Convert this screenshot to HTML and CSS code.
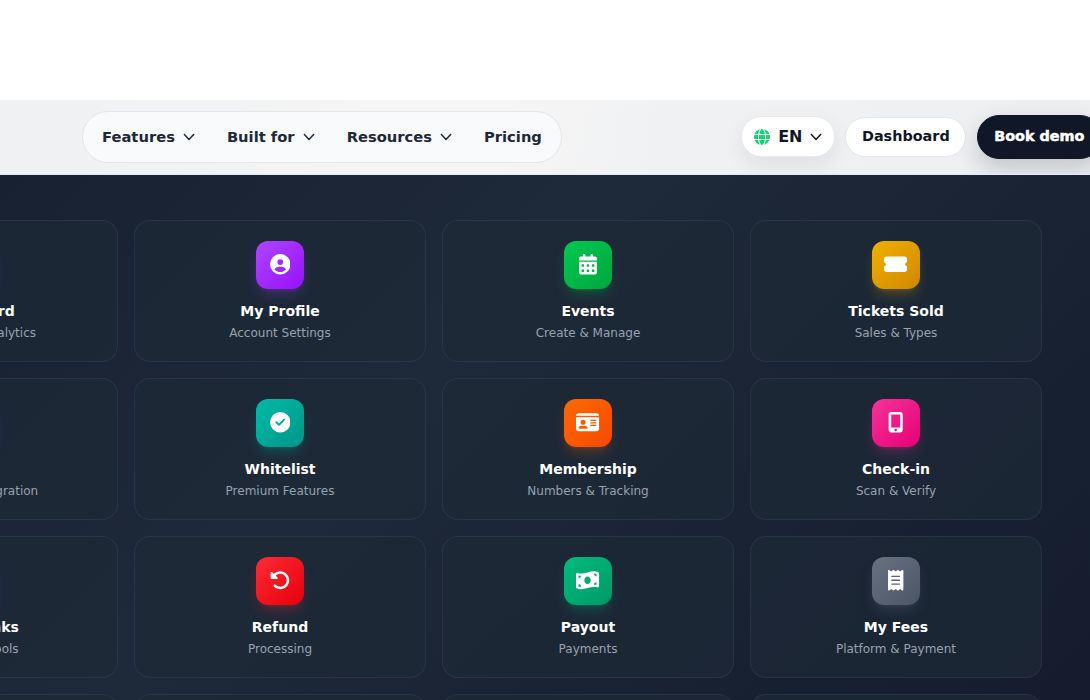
FILE: index.html
```html
<!DOCTYPE html>
<html lang="en">
<head>
<meta charset="utf-8">
<title>Event platform</title>
<link rel="stylesheet" href="styles.css">
</head>
<body>
<svg class="sprite" width="0" height="0">
  <symbol id="chevron" viewBox="0 0 12 12"><path d="M1.400 3.600 6 8.400 10.600 3.600" fill="none" stroke="currentColor" stroke-width="1.500" stroke-linecap="round" stroke-linejoin="round"/></symbol>
</svg>
<header class="header">
  <nav class="nav">
    <a class="nav-link">Features <svg class="chevron"><use href="#chevron"/></svg></a>
    <a class="nav-link">Built for <svg class="chevron"><use href="#chevron"/></svg></a>
    <a class="nav-link">Resources <svg class="chevron"><use href="#chevron"/></svg></a>
    <a class="nav-link">Pricing</a>
  </nav>
  <div class="actions">
    <a class="lang">
      <svg class="globe" viewBox="0 0 512 512"><path fill="currentColor" d="M352 256c0 22.2-1.2 43.6-3.3 64H163.3c-2.2-20.4-3.3-41.8-3.3-64s1.2-43.6 3.3-64H348.7c2.2 20.4 3.3 41.8 3.3 64zm28.8-64H503.9c5.3 20.5 8.1 41.9 8.1 64s-2.8 43.5-8.1 64H380.8c2.1-20.6 3.2-42 3.2-64s-1.1-43.4-3.2-64zm112.6-32H376.7c-10-63.9-29.8-117.4-55.3-151.6c78.3 20.7 142 77.5 171.9 151.6zm-149.1 0H167.7c6.1-36.4 15.5-68.6 27-94.7c10.5-23.6 22.2-40.7 33.5-51.5C239.4 3.2 248.7 0 256 0s16.6 3.2 27.8 13.8c11.3 10.8 23 27.9 33.5 51.5c11.6 26 20.9 58.2 27 94.7zm-209 0H18.6C48.6 85.9 112.2 29.1 190.6 8.4C165.1 42.6 145.3 96.1 135.3 160zM8.1 192H131.2c-2.1 20.6-3.2 42-3.2 64s1.1 43.4 3.2 64H8.1C2.8 299.5 0 278.1 0 256s2.8-43.5 8.1-64zM194.7 446.6c-11.6-26-20.9-58.2-27-94.6H344.3c-6.1 36.4-15.5 68.6-27 94.6c-10.5 23.6-22.2 40.7-33.5 51.5C272.6 508.8 263.3 512 256 512s-16.6-3.2-27.8-13.8c-11.3-10.8-23-27.9-33.5-51.5zM135.3 352c10 63.9 29.8 117.4 55.3 151.6C112.2 482.9 48.6 426.1 18.6 352H135.3zm358.1 0c-30 74.1-93.6 130.9-171.9 151.6c25.5-34.2 45.2-87.7 55.3-151.6H493.4z"/></svg>
      <span>EN</span>
      <svg class="chevron"><use href="#chevron"/></svg>
    </a>
    <a class="button">Dashboard</a>
    <a class="button button-dark">Book demo</a>
  </div>
</header>
<main class="hero">
  <div class="grid">
    <article class="card"><div class="tile blue"></div><h3>Dashboard</h3><p>Overview &amp; Analytics</p></article>
    <article class="card"><div class="tile purple"><svg viewBox="0 0 512 512"><path d="M399 384.2C376.9 345.8 335.4 320 288 320H224c-47.4 0-88.9 25.8-111 64.2c35.2 39.2 86.2 63.8 143 63.8s107.8-24.7 143-63.8zM0 256a256 256 0 1 1 512 0A256 256 0 1 1 0 256zm256 16a72 72 0 1 0 0-144 72 72 0 1 0 0 144z"/></svg></div><h3>My Profile</h3><p>Account Settings</p></article>
    <article class="card"><div class="tile green"><svg viewBox="0 0 448 512"><path d="M128 0c17.7 0 32 14.3 32 32V64H288V32c0-17.7 14.3-32 32-32s32 14.3 32 32V64h48c26.5 0 48 21.5 48 48v48H0V112C0 85.5 21.5 64 48 64H96V32c0-17.7 14.3-32 32-32zM0 192H448V464c0 26.5-21.5 48-48 48H48c-26.5 0-48-21.5-48-48V192zm64 80v32c0 8.8 7.2 16 16 16h32c8.8 0 16-7.2 16-16V272c0-8.8-7.2-16-16-16H80c-8.8 0-16 7.2-16 16zm128 0v32c0 8.800 7.200 16 16 16h32c8.800 0 16-7.200 16-16V272c0-8.800-7.200-16-16-16H208c-8.800 0-16 7.200-16 16zm144-16c-8.800 0-16 7.200-16 16v32c0 8.800 7.200 16 16 16h32c8.800 0 16-7.200 16-16V272c0-8.800-7.200-16-16-16H336zM64 400v32c0 8.800 7.200 16 16 16h32c8.800 0 16-7.200 16-16V400c0-8.800-7.200-16-16-16H80c-8.800 0-16 7.200-16 16zm144-16c-8.800 0-16 7.200-16 16v32c0 8.800 7.200 16 16 16h32c8.800 0 16-7.200 16-16V400c0-8.800-7.200-16-16-16H208zm112 16v32c0 8.800 7.200 16 16 16h32c8.800 0 16-7.200 16-16V400c0-8.800-7.200-16-16-16H336c-8.800 0-16 7.200-16 16z"/></svg></div><h3>Events</h3><p>Create &amp; Manage</p></article>
    <article class="card"><div class="tile yellow"><svg viewBox="0 0 576 512"><path d="M0 128C0 92.7 28.7 64 64 64H512c35.3 0 64 28.7 64 64v64c0 8.8-7.4 15.7-15.7 18.6C541.5 217.1 528 235 528 256s13.500 38.900 32.300 45.400c8.300 2.900 15.700 9.800 15.700 18.600v64c0 35.300-28.700 64-64 64H64c-35.300 0-64-28.700-64-64V320c0-8.800 7.400-15.700 15.700-18.600C34.500 294.900 48 277 48 256s-13.500-38.900-32.300-45.400C7.400 207.700 0 200.800 0 192V128z"/></svg></div><h3>Tickets Sold</h3><p>Sales &amp; Types</p></article>

    <article class="card"><div class="tile blue"></div><h3>Plugin</h3><p>WordPress Integration</p></article>
    <article class="card"><div class="tile teal"><svg viewBox="0 0 512 512"><path d="M256 512A256 256 0 1 0 256 0a256 256 0 1 0 0 512zM369 209L241 337c-9.4 9.4-24.6 9.4-33.9 0l-64-64c-9.4-9.4-9.4-24.6 0-33.9s24.6-9.4 33.9 0l47 47L335 175c9.400-9.400 24.600-9.400 33.900 0s9.400 24.600 0 33.900z"/></svg></div><h3>Whitelist</h3><p>Premium Features</p></article>
    <article class="card"><div class="tile orange"><svg viewBox="0 0 576 512"><path d="M0 96l576 0c0-35.300-28.700-64-64-64H64C28.700 32 0 60.700 0 96zm0 32V416c0 35.300 28.700 64 64 64H512c35.300 0 64-28.700 64-64V128H0zM64 405.300c0-29.500 23.900-53.300 53.300-53.300H234.700c29.500 0 53.300 23.900 53.300 53.300c0 5.900-4.800 10.700-10.700 10.700H74.700c-5.900 0-10.700-4.800-10.700-10.700zM176 192a64 64 0 1 1 0 128 64 64 0 1 1 0-128zm176 16c0-8.800 7.200-16 16-16H496c8.800 0 16 7.200 16 16s-7.200 16-16 16H368c-8.800 0-16-7.200-16-16zm0 64c0-8.800 7.200-16 16-16H496c8.800 0 16 7.200 16 16s-7.200 16-16 16H368c-8.800 0-16-7.200-16-16zm0 64c0-8.800 7.200-16 16-16H496c8.800 0 16 7.200 16 16s-7.200 16-16 16H368c-8.800 0-16-7.200-16-16z"/></svg></div><h3>Membership</h3><p>Numbers &amp; Tracking</p></article>
    <article class="card"><div class="tile pink"><svg viewBox="0 0 384 512"><path d="M16 64C16 28.700 44.700 0 80 0H304c35.300 0 64 28.700 64 64V448c0 35.300-28.700 64-64 64H80c-35.300 0-64-28.700-64-64V64zM224 448a32 32 0 1 0 -64 0 32 32 0 1 0 64 0zM304 64H80V384H304V64z"/></svg></div><h3>Check-in</h3><p>Scan &amp; Verify</p></article>

    <article class="card"><div class="tile blue"></div><h3>Media Links</h3><p>Marketing Tools</p></article>
    <article class="card"><div class="tile red"><svg viewBox="0 0 512 512"><path d="M48.500 224H40c-13.300 0-24-10.700-24-24V72c0-9.700 5.800-18.500 14.800-22.200s19.300-1.700 26.200 5.200L98.600 96.600c87.600-86.500 228.700-86.200 315.800 1c87.500 87.500 87.500 229.300 0 316.800s-229.300 87.500-316.800 0c-12.500-12.500-12.500-32.800 0-45.300s32.800-12.500 45.300 0c62.500 62.500 163.800 62.500 226.300 0s62.500-163.800 0-226.300c-62.200-62.200-162.700-62.500-225.300-1L185 183c6.900 6.900 8.900 17.200 5.200 26.200s-12.500 14.800-22.200 14.800H48.500z"/></svg></div><h3>Refund</h3><p>Processing</p></article>
    <article class="card"><div class="tile emerald"><svg viewBox="0 0 576 512"><path d="M0 112.500V422.300c0 18 10.100 35 27 41.300c87 32.500 174 10.300 261-11.900c79.800-20.300 159.600-40.700 239.300-18.900c23 6.300 48.700-9.500 48.700-33.400V89.700c0-18-10.100-35-27-41.300C462 15.900 375 38.100 288 60.300C208.200 80.600 128.400 100.900 48.700 79.100C25.600 72.800 0 88.600 0 112.500zM288 352c-44.200 0-80-43-80-96s35.800-96 80-96s80 43 80 96s-35.800 96-80 96zM64 352c35.300 0 64 28.700 64 64H64V352zm64-208c0 35.300-28.700 64-64 64V144h64zM512 304v64H448c0-35.300 28.700-64 64-64zM448 96h64v64c-35.300 0-64-28.700-64-64z"/></svg></div><h3>Payout</h3><p>Payments</p></article>
    <article class="card"><div class="tile gray"><svg viewBox="0 0 384 512"><path d="M14 2.200C22.500-1.700 32.500-.3 39.600 5.800L80 40.400 120.400 5.800c9-7.700 22.300-7.700 31.200 0L192 40.400 232.400 5.800c9-7.700 22.300-7.700 31.200 0L304 40.400 344.400 5.800c7.100-6.100 17.100-7.500 25.600-3.600s14 12.400 14 21.800V488c0 9.400-5.500 17.900-14 21.800s-18.500 2.500-25.600-3.600L304 471.600l-40.400 34.600c-9 7.700-22.300 7.700-31.200 0L192 471.600l-40.400 34.600c-9 7.700-22.300 7.700-31.200 0L80 471.600 39.600 506.200c-7.100 6.100-17.100 7.500-25.600 3.600S0 497.400 0 488V24C0 14.600 5.500 6.100 14 2.200zM96 144c-8.800 0-16 7.200-16 16s7.200 16 16 16H288c8.800 0 16-7.200 16-16s-7.200-16-16-16H96zM80 352c0 8.800 7.200 16 16 16H288c8.800 0 16-7.200 16-16s-7.200-16-16-16H96c-8.800 0-16 7.200-16 16zM96 240c-8.800 0-16 7.200-16 16s7.200 16 16 16H288c8.800 0 16-7.200 16-16s-7.200-16-16-16H96z"/></svg></div><h3>My Fees</h3><p>Platform &amp; Payment</p></article>

    <article class="card"></article>
    <article class="card"></article>
    <article class="card"></article>
    <article class="card"></article>
  </div>
</main>
</body>
</html>
```

FILE: styles.css
```css
* { box-sizing: border-box; }

body {
  margin: 0;
  padding-top: 100px;
  height: 700px;
  overflow: hidden;
  background: #fff;
  font-family: "DejaVu Sans", sans-serif;
}

.sprite { display: block; }

.header {
  display: flex;
  align-items: center;
  justify-content: space-between;
  height: 75px;
  padding-left: 82px;
  overflow: hidden;
  background: linear-gradient(100deg, #eff1f3 0, #f1f2f3 210px, #f5f5f5 360px, #f5f5f5 500px, #f0f1f3 670px, #eeeff1 100%);
  border-bottom: 1px solid #e7eaee;
}

.nav {
  display: flex;
  align-items: center;
  height: 52px;
  padding: 0 3px;
  border: 1px solid #e3e6ea;
  border-radius: 26px;
  background: #f9fafc;
}

.nav-link {
  display: flex;
  align-items: center;
  gap: 8px;
  padding: 0 16px;
  color: #1e2939;
  font-size: 14.72px;
  font-weight: 600;
  line-height: 20px;
  white-space: nowrap;
}

.chevron { width: 12px; height: 12px; flex: none; }

.actions {
  display: flex;
  align-items: center;
  flex: none;
  margin-right: -12px;
}

.lang {
  display: flex;
  align-items: center;
  gap: 8px;
  height: 41px;
  margin: 0 10px 1px 0;
  padding: 0 12px;
  border: 1px solid #e8eaed;
  border-radius: 21px;
  background: #fff;
  color: #101828;
  font-size: 16px;
  font-weight: 600;
  box-shadow: 0 8px 20px rgba(16, 24, 40, .08);
}

.globe { width: 16px; height: 16px; color: #12d672; }

.button {
  display: flex;
  align-items: center;
  height: 40px;
  padding: 0 15.5px 2px;
  border: 1px solid #e3e6ea;
  border-radius: 22px;
  background: #fff;
  color: #101828;
  font-size: 14.4px;
  font-weight: 600;
  white-space: nowrap;
}

.button-dark {
  height: 44px;
  margin-left: 11px;
  padding: 0 16.5px 2px 16px;
  border-color: #101828;
  background: #101828;
  color: #fff;
  -webkit-text-stroke: .5px #fff;
  box-shadow: 0 10px 24px rgba(16, 24, 40, .2);
}

.hero {
  display: flex;
  justify-content: flex-end;
  height: 525px;
  padding: 45px 48px 0 0;
  overflow: hidden;
  background: linear-gradient(135deg, #182132 0, #1e2939 440px, #141c2d 1142px);
}

.grid {
  display: grid;
  grid-template-columns: repeat(4, 292px);
  grid-auto-rows: 142px;
  gap: 16px;
  flex: none;
}

.card {
  display: flex;
  flex-direction: column;
  align-items: center;
  padding: 20px;
  border: 1px solid rgba(54, 72, 88, .4);
  border-radius: 16px;
  background: rgba(30, 41, 56, .7);
}

.card h3 {
  margin: 12px 0 4px;
  color: #fff;
  font-size: 14px;
  font-weight: 600;
  line-height: 20px;
}

.card p {
  margin: 0;
  color: #99a1af;
  font-size: 12px;
  line-height: 16px;
}

.tile {
  display: flex;
  align-items: center;
  justify-content: center;
  width: 48px;
  height: 48px;
  padding-bottom: 1px;
  border-radius: 12px;
  background: linear-gradient(135deg, var(--from), var(--to));
  box-shadow: 0 8px 14px -3px var(--glow), 0 3px 5px -3px var(--glow);
}

.tile svg { height: 20.5px; fill: #fff; }

.blue { --from: #2b7fff; --to: #155dfc; --glow: rgba(43, 127, 255, .25); }
.purple { --from: #ad46ff; --to: #9810fa; --glow: rgba(173, 70, 255, .25); }
.green { --from: #00c950; --to: #00a63e; --glow: rgba(0, 201, 80, .25); }
.yellow { --from: #f0b100; --to: #d08700; --glow: rgba(240, 177, 0, .25); }
.teal { --from: #00bba7; --to: #009689; --glow: rgba(0, 187, 167, .25); }
.orange { --from: #ff6900; --to: #f54900; --glow: rgba(255, 105, 0, .25); }
.pink { --from: #f6339a; --to: #e60076; --glow: rgba(246, 51, 154, .25); }
.red { --from: #fb2c36; --to: #e7000b; --glow: rgba(251, 44, 54, .25); }
.emerald { --from: #00bc7d; --to: #009966; --glow: rgba(0, 188, 125, .25); }
.gray { --from: #6a7282; --to: #4a5565; --glow: rgba(106, 114, 130, .25); }
```
